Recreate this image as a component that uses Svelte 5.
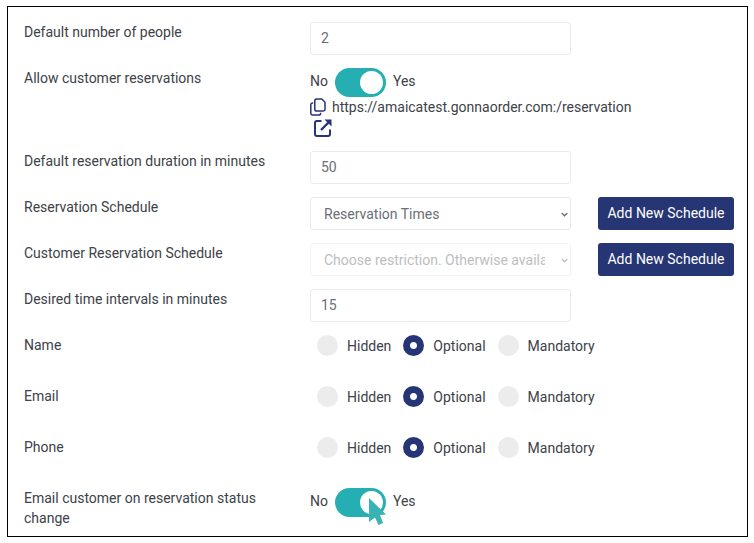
<script lang="ts">
  type Visibility = 'hidden' | 'optional' | 'mandatory';

  const url = 'https://amaicatest.gonnaorder.com:/reservation';

  const visibilityOptions: { value: Visibility; label: string }[] = [
    { value: 'hidden', label: 'Hidden' },
    { value: 'optional', label: 'Optional' },
    { value: 'mandatory', label: 'Mandatory' }
  ];

  let people = $state('2');
  let duration = $state('50');
  let interval = $state('15');
  let allowReservations = $state(true);
  let emailOnChange = $state(true);
  let schedule = $state('times');
  let customerSchedule = $state('');

  let contactFields = $state<{ id: string; label: string; value: Visibility }[]>([
    { id: 'name', label: 'Name', value: 'optional' },
    { id: 'email', label: 'Email', value: 'optional' },
    { id: 'phone', label: 'Phone', value: 'optional' }
  ]);

  function copyUrl() {
    navigator.clipboard?.writeText(url);
  }
</script>

<form class="settings" onsubmit={(e) => e.preventDefault()}>
  <div class="row">
    <label for="people">Default number of people</label>
    <input class="field" id="people" type="text" bind:value={people} />
  </div>

  <div class="row">
    <label for="allow">Allow customer reservations</label>
    <div>
      <div class="switch">
        <span class="state">No</span>
        <input id="allow" type="checkbox" role="switch" bind:checked={allowReservations} />
        <span class="state">Yes</span>
      </div>
      <div class="url">
        <button type="button" class="icon" aria-label="Copy link" onclick={copyUrl}>
          <svg width="16" height="18" viewBox="0 0 16 18" fill="none" stroke="currentColor" stroke-width="1.5">
            <path d="M6.600 1h5.200L15 4.200v7a1.800 1.800 0 0 1-1.800 1.800H6.600a1.800 1.800 0 0 1-1.800-1.800V2.800A1.800 1.800 0 0 1 6.600 1z" />
            <path d="M3.200 5h-.6A1.800 1.800 0 0 0 .8 6.800v8.400A1.800 1.800 0 0 0 2.600 17h6.200a1.800 1.800 0 0 0 1.800-1.800v-.4" />
          </svg>
        </button>
        <span>{url}</span>
      </div>
      <a class="open" href={url} aria-label="Open reservation page">
        <svg width="18" height="18" viewBox="0 0 18 18" fill="none" stroke="currentColor" stroke-width="2">
          <path d="M7.500 2H3a2 2 0 0 0-2 2v11a2 2 0 0 0 2 2h11a2 2 0 0 0 2-2v-4.500" />
          <path d="M7 11l7.500-7.500" stroke-width="2.400" />
          <path d="M10.500 .5H17.500V7.500z" fill="currentColor" stroke="none" />
        </svg>
      </a>
    </div>
  </div>

  <div class="row">
    <label for="duration">Default reservation duration in minutes</label>
    <input class="field" id="duration" type="text" bind:value={duration} />
  </div>

  <div class="row">
    <label for="schedule">Reservation Schedule</label>
    <div class="select">
      <select class="field" id="schedule" bind:value={schedule}>
        <option value="times">Reservation Times</option>
      </select>
      <svg class="chevron" width="7" height="5" viewBox="0 0 7 5" fill="none" stroke="currentColor" stroke-width="1.3">
        <path d="M.7 1l2.800 2.800L6.300 1" />
      </svg>
    </div>
    <button type="button" class="add">Add New Schedule</button>
  </div>

  <div class="row">
    <label for="customer-schedule">Customer Reservation Schedule</label>
    <div class="select empty">
      <select class="field" id="customer-schedule" bind:value={customerSchedule}>
        <option value="">Choose restriction. Otherwise available always</option>
      </select>
      <svg class="chevron" width="7" height="5" viewBox="0 0 7 5" fill="none" stroke="currentColor" stroke-width="1.3">
        <path d="M.7 1l2.800 2.800L6.300 1" />
      </svg>
    </div>
    <button type="button" class="add">Add New Schedule</button>
  </div>

  <div class="row">
    <label for="interval">Desired time intervals in minutes</label>
    <input class="field" id="interval" type="text" bind:value={interval} />
  </div>

  {#each contactFields as field (field.id)}
    <div class="row tall">
      <span id="{field.id}-title">{field.label}</span>
      <div class="radios" role="radiogroup" aria-labelledby="{field.id}-title">
        {#each visibilityOptions as option (option.value)}
          <label>
            <input type="radio" name={field.id} value={option.value} bind:group={field.value} />
            {option.label}
          </label>
        {/each}
      </div>
    </div>
  {/each}

  <div class="row">
    <label for="email-change">Email customer on reservation status change</label>
    <div class="switch">
      <span class="state">No</span>
      <span class="pointed">
        <input id="email-change" type="checkbox" role="switch" bind:checked={emailOnChange} />
        <svg class="cursor" width="18" height="28" viewBox="0 0 18 28" aria-hidden="true">
          <path d="M0 0L17 16.500L11 17L14 25L9.500 27L6 19.500L0 24z" fill="#39b3b3" />
        </svg>
      </span>
      <span class="state">Yes</span>
    </div>
  </div>
</form>

<style>
  :global(body) {
    background: #fff;
  }

  .settings {
    display: flex;
    flex-direction: column;
    gap: 13px;
    margin: 6px 6px 5px 7px;
    padding: 15px 13px 8px 16px;
    border: 1px solid #000;
    color: #3c4248;
    font: 14px/20px Roboto, sans-serif;
  }

  .row {
    display: grid;
    grid-template-columns: minmax(0, 259fr) minmax(0, 261fr) 136px;
    column-gap: 27px;
    align-items: start;
    min-height: 33px;
  }

  .tall {
    min-height: 38px;
  }

  input,
  select,
  button {
    margin: 0;
    font: inherit;
  }

  .field {
    box-sizing: border-box;
    width: 100%;
    height: 33px;
    padding: 0 10px 1px;
    border: 1px solid #e9eaec;
    border-radius: 3px;
    background: #fff;
    color: #6a6e76;
  }

  .select {
    position: relative;
    color: #6a6e76;
  }

  select.field {
    appearance: none;
    padding: 0 25px 0 13px;
    color: inherit;
  }

  .empty {
    color: #bdbec1;
  }

  .empty .field {
    border-color: #f2f2f3;
  }

  .chevron {
    position: absolute;
    top: 15px;
    right: 3px;
    pointer-events: none;
  }

  .add {
    height: 33px;
    padding: 0 0 1px;
    border: 0;
    border-radius: 3px;
    background: #263573;
    color: #fff;
  }

  .switch {
    display: flex;
    gap: 7px;
    height: 29px;
  }

  .state {
    line-height: 27px;
  }

  .switch input {
    appearance: none;
    display: block;
    width: 51px;
    height: 29px;
    padding: 3px;
    box-sizing: border-box;
    border-radius: 15px;
    background: #ccc;
  }

  .switch input::before {
    content: '';
    display: block;
    width: 23px;
    height: 23px;
    border-radius: 50%;
    background: #fff;
  }

  .switch input:checked {
    background: #25afb2;
  }

  .switch input:checked::before {
    margin-left: auto;
  }

  .pointed {
    position: relative;
  }

  .cursor {
    position: absolute;
    top: 10px;
    left: 34px;
    pointer-events: none;
  }

  .url {
    display: flex;
    align-items: center;
    gap: 6px;
    height: 20px;
    white-space: nowrap;
  }

  .icon {
    padding: 0;
    border: 0;
    background: none;
    color: #263573;
  }

  .icon svg,
  .open svg {
    display: block;
  }

  .open {
    display: block;
    width: 18px;
    padding: 2px 0 1px 4px;
    color: #263573;
  }

  .radios {
    display: flex;
    gap: 12px;
    padding-left: 7px;
    white-space: nowrap;
  }

  .radios label {
    display: flex;
    align-items: center;
    gap: 9px;
  }

  .radios input {
    appearance: none;
    width: 21px;
    height: 21px;
    border-radius: 50%;
    background: #ececec;
  }

  .radios input:checked {
    background: radial-gradient(circle, #fff 3px, #263573 4px);
  }
</style>
